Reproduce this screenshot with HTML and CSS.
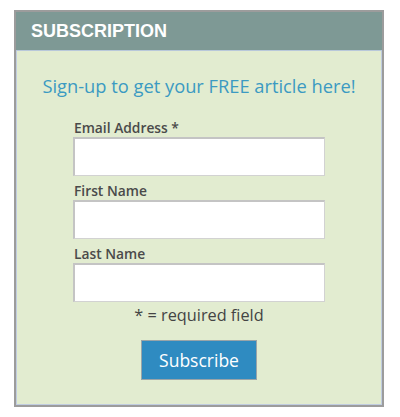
FILE: index.html
```html
<!DOCTYPE html>
<html>
<head>
<meta charset="utf-8">
<link rel="stylesheet" href="styles.css">
</head>
<body>
<div class="box">
  <div class="head">SUBSCRIPTION</div>
  <div class="body">
    <p class="tag">Sign-up to get your FREE article here!</p>
    <form class="form">
      <label class="lbl">Email Address *</label>
      <input class="inp" type="text">
      <label class="lbl">First Name</label>
      <input class="inp" type="text">
      <label class="lbl">Last Name</label>
      <input class="inp" type="text">
      <div class="req">* = required field</div>
      <button class="btn" type="button">Subscribe</button>
    </form>
  </div>
</div>
</body>
</html>
```
FILE: styles.css
```css
html, body { margin: 0; padding: 0; background: #fff; }
body { padding: 10px 0 0 14px; }
.box {
  width: 366px;
  border: 2px solid #9c9c9c;
  box-shadow: inset 0 0 0 1px #c0cde0;
  background: #e2ecd0;
}
.head {
  height: 38px;
  background: #7e9995;
  color: #fff;
  font-family: "Liberation Sans", Arial, sans-serif;
  font-weight: bold;
  font-size: 18px;
  line-height: 38px;
  padding-left: 15px;
  border-bottom: 1px solid #b8c8da;
}
.body {
  height: 354px;
  display: flex;
  flex-direction: column;
  align-items: center;
}
.tag {
  margin: 23px 0 0 0;
  font-family: "Open Sans", sans-serif;
  font-size: 18.3px;
  color: #3b9ac2;
  line-height: 24px;
}
.form {
  display: flex;
  flex-direction: column;
  width: 252px;
  margin-top: 21px;
}
.lbl {
  font-family: "Open Sans", sans-serif;
  font-weight: 600;
  font-size: 13.8px;
  color: #4a4a4a;
  line-height: 17px;
  height: 18px;
  padding-left: 1px;
}
.inp {
  box-sizing: border-box;
  height: 39px;
  width: 252px;
  margin: 0 0 6px 0;
  border: 1px solid #d2d2d2;
  border-top: 2px solid #c4c4c4;
  border-left: 2px solid #c4c4c4;
  background: #fff;
}
.req {
  text-align: center;
  font-family: "Open Sans", sans-serif;
  font-size: 16.3px;
  color: #444;
  line-height: 20px;
  margin-top: -3px;
}
.btn {
  align-self: center;
  margin-top: 15px;
  width: 116px;
  height: 40px;
  background: #2f8bc1;
  border: 1px solid #9aa4a8;
  color: #fff;
  font-family: "Open Sans", sans-serif;
  font-size: 17.5px;
  padding: 0;
}
```
